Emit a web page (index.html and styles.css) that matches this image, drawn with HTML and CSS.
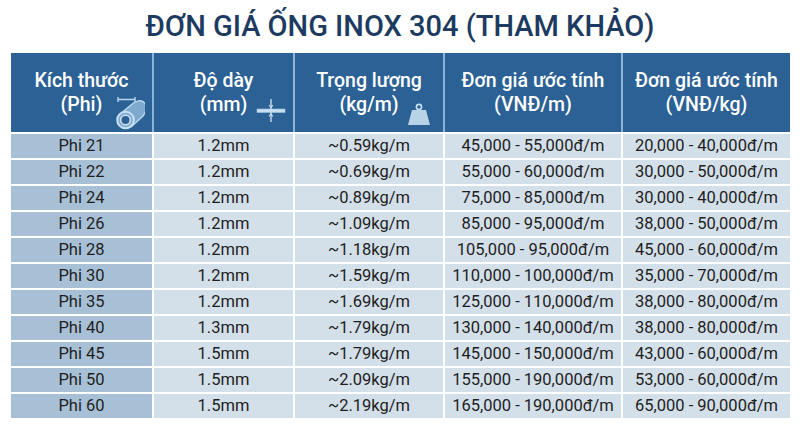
FILE: index.html
```html
<!DOCTYPE html>
<html lang="vi">
<head>
<meta charset="utf-8">
<title>Đơn giá ống inox 304</title>
<link rel="stylesheet" href="styles.css">
</head>
<body>
<h1 class="title">ĐƠN GIÁ ỐNG INOX 304 (THAM KHẢO)</h1>
<div class="table">
  <div class="hcell">
    <span>Kích thước</span><span>(Phi)</span>
    <svg class="icon icon-pipe" width="30" height="34" viewBox="0 0 30 34">
      <g fill="none" stroke="#bcd8ee" stroke-width="1.4">
        <path d="M3 1 V6 M20 1 V6 M3 3.5 H20"/>
      </g>
      <path d="M4.5 18.5 L16 9 A6 8.5 40 0 1 27 21 L16 31 Z" fill="#7fa9cf" stroke="#bcd8ee" stroke-width="1.4"/>
      <circle cx="10.5" cy="24" r="8.3" fill="#7fa9cf" stroke="#c9e0f2" stroke-width="2"/>
      <circle cx="10.5" cy="24" r="4.8" fill="#2b6195" stroke="#c9e0f2" stroke-width="1.6"/>
    </svg>
  </div>
  <div class="hcell">
    <span>Độ dày</span><span>(mm)</span>
    <svg class="icon icon-thick" width="30" height="26" viewBox="0 0 30 26">
      <rect x="1" y="11" width="28" height="3.5" fill="#c7def0" stroke="#9fc2e0" stroke-width="0.6"/>
      <path d="M15 1 V24" stroke="#c7def0" stroke-width="1.4"/>
      <path d="M13 7 L15 9.5 L17 7 M13 18.5 L15 16 L17 18.5" fill="none" stroke="#c7def0" stroke-width="1.1"/>
    </svg>
  </div>
  <div class="hcell">
    <span>Trọng lượng</span><span>(kg/m)</span>
    <svg class="icon icon-weight" width="24" height="23" viewBox="0 0 24 23">
      <circle cx="12" cy="4" r="2.6" fill="none" stroke="#c7def0" stroke-width="1.6"/>
      <path d="M5 7 H19 L23 22 H1 Z" fill="#b8d2e8"/>
    </svg>
  </div>
  <div class="hcell"><span>Đơn giá ước tính</span><span>(VNĐ/m)</span></div>
  <div class="hcell"><span>Đơn giá ước tính</span><span>(VNĐ/kg)</span></div>

  <div class="cell first">Phi 21</div><div class="cell">1.2mm</div><div class="cell">~0.59kg/m</div><div class="cell">45,000 - 55,000đ/m</div><div class="cell">20,000 - 40,000đ/m</div>
  <div class="cell first">Phi 22</div><div class="cell">1.2mm</div><div class="cell">~0.69kg/m</div><div class="cell">55,000 - 60,000đ/m</div><div class="cell">30,000 - 50,000đ/m</div>
  <div class="cell first">Phi 24</div><div class="cell">1.2mm</div><div class="cell">~0.89kg/m</div><div class="cell">75,000 - 85,000đ/m</div><div class="cell">30,000 - 40,000đ/m</div>
  <div class="cell first">Phi 26</div><div class="cell">1.2mm</div><div class="cell">~1.09kg/m</div><div class="cell">85,000 - 95,000đ/m</div><div class="cell">38,000 - 50,000đ/m</div>
  <div class="cell first">Phi 28</div><div class="cell">1.2mm</div><div class="cell">~1.18kg/m</div><div class="cell">105,000 - 95,000đ/m</div><div class="cell">45,000 - 60,000đ/m</div>
  <div class="cell first">Phi 30</div><div class="cell">1.2mm</div><div class="cell">~1.59kg/m</div><div class="cell">110,000 - 100,000đ/m</div><div class="cell">35,000 - 70,000đ/m</div>
  <div class="cell first">Phi 35</div><div class="cell">1.2mm</div><div class="cell">~1.69kg/m</div><div class="cell">125,000 - 110,000đ/m</div><div class="cell">38,000 - 80,000đ/m</div>
  <div class="cell first">Phi 40</div><div class="cell">1.3mm</div><div class="cell">~1.79kg/m</div><div class="cell">130,000 - 140,000đ/m</div><div class="cell">38,000 - 80,000đ/m</div>
  <div class="cell first">Phi 45</div><div class="cell">1.5mm</div><div class="cell">~1.79kg/m</div><div class="cell">145,000 - 150,000đ/m</div><div class="cell">43,000 - 60,000đ/m</div>
  <div class="cell first">Phi 50</div><div class="cell">1.5mm</div><div class="cell">~2.09kg/m</div><div class="cell">155,000 - 190,000đ/m</div><div class="cell">53,000 - 60,000đ/m</div>
  <div class="cell first">Phi 60</div><div class="cell">1.5mm</div><div class="cell">~2.19kg/m</div><div class="cell">165,000 - 190,000đ/m</div><div class="cell">65,000 - 90,000đ/m</div>
</div>
</body>
</html>
```

FILE: styles.css
```css
html, body {
  margin: 0;
  padding: 0;
  background: #ffffff;
}
body {
  font-family: Roboto, "Noto Sans", "Liberation Sans", sans-serif;
  width: 800px;
  height: 437px;
  overflow: hidden;
}
.title {
  margin: 0;
  height: 53px;
  line-height: 53px;
  text-align: center;
  font-size: 29px;
  font-weight: 500;
  color: #1d3b60;
}
.table {
  width: 779px;
  margin-left: 11px;
  display: grid;
  grid-template-columns: 141px 139px 148px 176px 167px;
  grid-template-rows: 79px;
  grid-auto-rows: 24px;
  column-gap: 2px;
  row-gap: 2px;
  background: #ffffff;
}
.hcell {
  position: relative;
  background: #2b6195;
  color: #ffffff;
  display: flex;
  flex-direction: column;
  align-items: center;
  justify-content: center;
  font-size: 19.5px;
  font-weight: 500;
  line-height: 24px;
  box-shadow: 1px 0 0 #8db4d8, -1px 0 0 #8db4d8;
}
.hcell:first-child { box-shadow: 1px 0 0 #8db4d8; }
.hcell:nth-child(5) { box-shadow: -1px 0 0 #8db4d8; }
.icon {
  position: absolute;
}
.icon-pipe { right: 7px; bottom: 2px; }
.icon-thick { right: 7px; bottom: 8px; }
.icon-weight { right: 12px; bottom: 6px; }
.cell {
  background: #d3dfe9;
  color: #1e1e1e;
  font-size: 16.5px;
  line-height: 24px;
  text-align: center;
  white-space: nowrap;
}
.cell.first {
  background: #a8c0d6;
}
```
